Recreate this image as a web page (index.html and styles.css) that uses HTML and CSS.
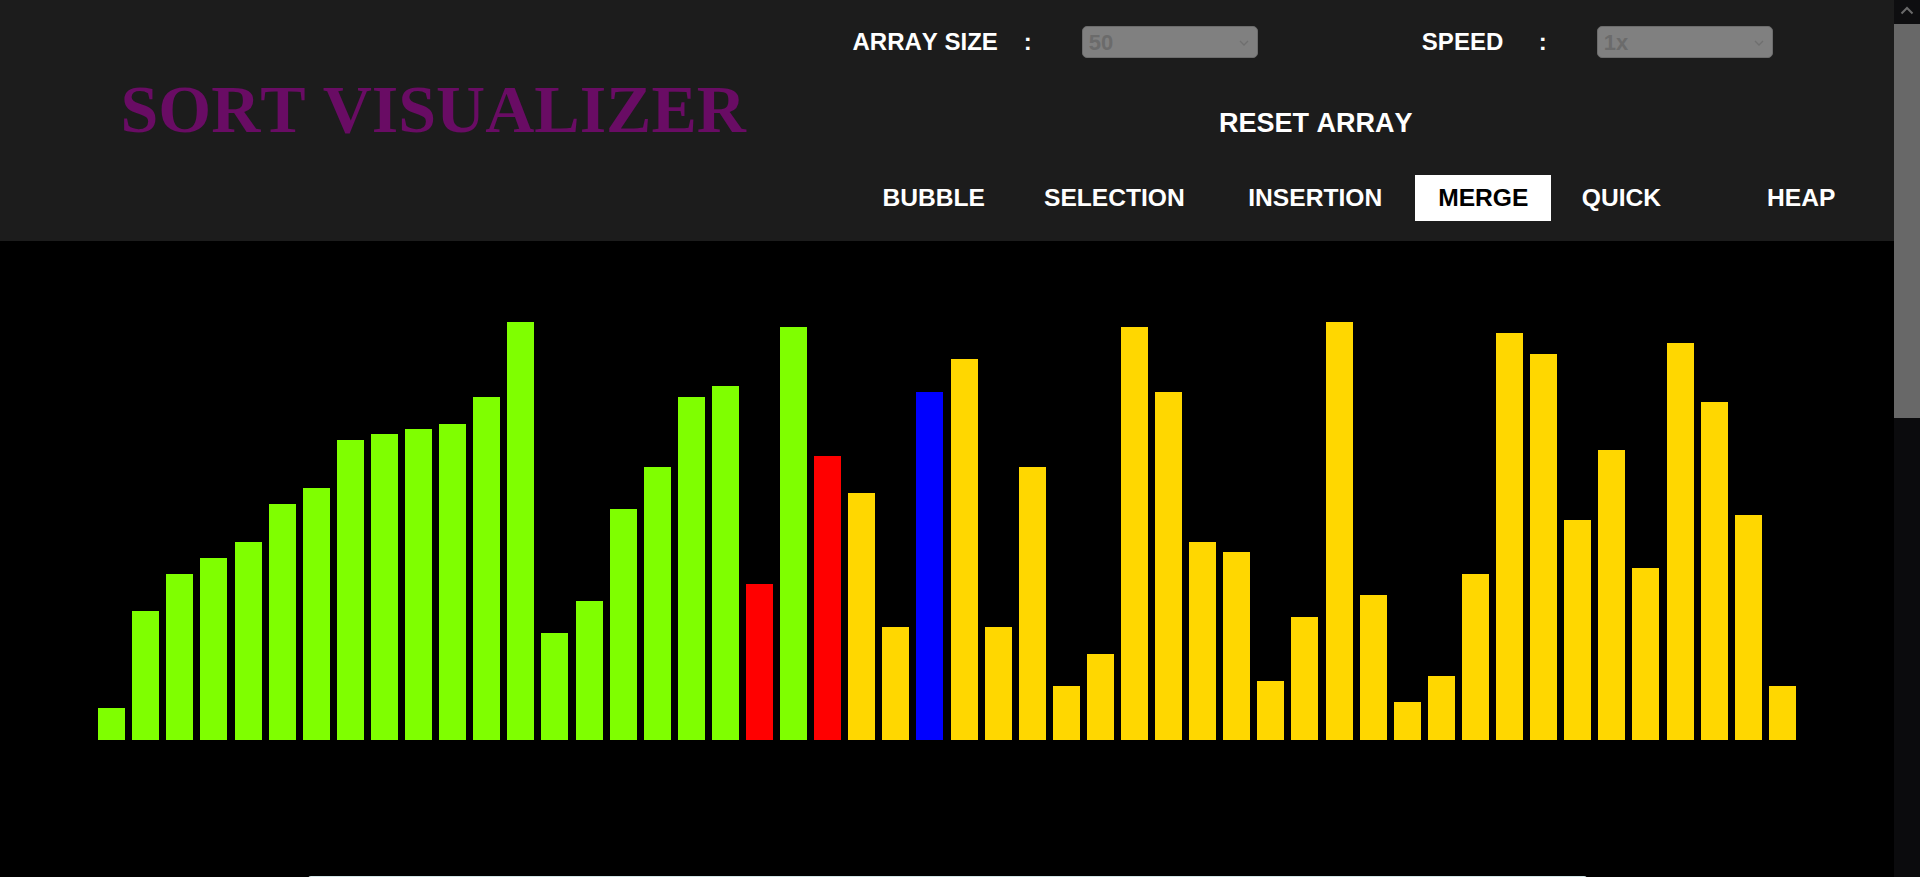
FILE: index.html
```html
<!DOCTYPE html>
<html lang="en">
<head>
<meta charset="utf-8">
<title>Sort Visualizer</title>
<link rel="stylesheet" href="styles.css">
</head>
<body>
<div class="page">
  <header class="topbar">
    <h1 class="title">SORT VISUALIZER</h1>
    <div class="panel">
      <div class="controls">
        <span class="label">ARRAY SIZE</span>
        <span class="colon colon-size">:</span>
        <span class="select-wrap">
          <select class="select" disabled><option>50</option></select>
          <svg class="chevron" width="10" height="6" viewBox="0 0 10 6"><path d="M1 1 L5 5 L9 1" fill="none" stroke="#6f6f6f" stroke-width="1.3"/></svg>
        </span>
        <span class="label label-speed">SPEED</span>
        <span class="colon colon-speed">:</span>
        <span class="select-wrap">
          <select class="select" disabled><option>1x</option></select>
          <svg class="chevron" width="10" height="6" viewBox="0 0 10 6"><path d="M1 1 L5 5 L9 1" fill="none" stroke="#6f6f6f" stroke-width="1.3"/></svg>
        </span>
      </div>
      <button class="reset">RESET ARRAY</button>
      <nav class="algos">
        <button class="algo">BUBBLE</button>
        <button class="algo">SELECTION</button>
        <button class="algo">INSERTION</button>
        <button class="algo active">MERGE</button>
        <button class="algo">QUICK</button>
        <button class="algo">HEAP</button>
      </nav>
    </div>
  </header>
  <main class="stage">
    <div class="bars">
      <div class="bar sorted" style="height:32px"></div>
      <div class="bar sorted" style="height:129px"></div>
      <div class="bar sorted" style="height:166px"></div>
      <div class="bar sorted" style="height:182px"></div>
      <div class="bar sorted" style="height:198px"></div>
      <div class="bar sorted" style="height:236px"></div>
      <div class="bar sorted" style="height:252px"></div>
      <div class="bar sorted" style="height:300px"></div>
      <div class="bar sorted" style="height:306px"></div>
      <div class="bar sorted" style="height:311px"></div>
      <div class="bar sorted" style="height:316px"></div>
      <div class="bar sorted" style="height:343px"></div>
      <div class="bar sorted" style="height:418px"></div>
      <div class="bar sorted" style="height:107px"></div>
      <div class="bar sorted" style="height:139px"></div>
      <div class="bar sorted" style="height:231px"></div>
      <div class="bar sorted" style="height:273px"></div>
      <div class="bar sorted" style="height:343px"></div>
      <div class="bar sorted" style="height:354px"></div>
      <div class="bar compare" style="height:156px"></div>
      <div class="bar sorted" style="height:413px"></div>
      <div class="bar compare" style="height:284px"></div>
      <div class="bar idle" style="height:247px"></div>
      <div class="bar idle" style="height:113px"></div>
      <div class="bar pivot" style="height:348px"></div>
      <div class="bar idle" style="height:381px"></div>
      <div class="bar idle" style="height:113px"></div>
      <div class="bar idle" style="height:273px"></div>
      <div class="bar idle" style="height:54px"></div>
      <div class="bar idle" style="height:86px"></div>
      <div class="bar idle" style="height:413px"></div>
      <div class="bar idle" style="height:348px"></div>
      <div class="bar idle" style="height:198px"></div>
      <div class="bar idle" style="height:188px"></div>
      <div class="bar idle" style="height:59px"></div>
      <div class="bar idle" style="height:123px"></div>
      <div class="bar idle" style="height:418px"></div>
      <div class="bar idle" style="height:145px"></div>
      <div class="bar idle" style="height:38px"></div>
      <div class="bar idle" style="height:64px"></div>
      <div class="bar idle" style="height:166px"></div>
      <div class="bar idle" style="height:407px"></div>
      <div class="bar idle" style="height:386px"></div>
      <div class="bar idle" style="height:220px"></div>
      <div class="bar idle" style="height:290px"></div>
      <div class="bar idle" style="height:172px"></div>
      <div class="bar idle" style="height:397px"></div>
      <div class="bar idle" style="height:338px"></div>
      <div class="bar idle" style="height:225px"></div>
      <div class="bar idle" style="height:54px"></div>
    </div>
  </main>
  <div class="footer-strip"></div>
</div>
<div class="scrollbar">
  <div class="scroll-btn">
    <svg width="14" height="9" viewBox="0 0 14 9"><path d="M1.5 7.5 L7 2 L12.5 7.5" fill="none" stroke="#6a6a6a" stroke-width="2"/></svg>
  </div>
  <div class="scroll-thumb"></div>
  <div class="scroll-track"></div>
</div>
</body>
</html>
```

FILE: styles.css
```css
* {
  box-sizing: border-box;
}

html,
body {
  margin: 0;
  padding: 0;
  height: 877px;
  overflow: hidden;
  background: #000;
}

body {
  display: flex;
  font-family: "Liberation Sans", Arial, sans-serif;
  font-kerning: none;
}

.page {
  flex: 1;
  min-width: 0;
  display: flex;
  flex-direction: column;
  overflow: hidden;
}

/* ---------- header ---------- */
.topbar {
  flex: none;
  height: 241px;
  background: #1c1c1c;
  display: grid;
  grid-template-columns: 840px 1fr;
}

.title {
  margin: 70px 0 0 0;
  padding-left: 120.5px;
  font-family: "Liberation Serif", "Times New Roman", serif;
  font-weight: bold;
  font-size: 68px;
  line-height: 78px;
  color: #690c64;
  white-space: nowrap;
  align-self: start;
  font-kerning: none;
}

.panel {
  display: flex;
  flex-direction: column;
  align-items: flex-start;
}

.controls {
  margin-top: 26px;
  height: 32px;
  padding-left: 12.5px;
  display: flex;
  align-items: center;
  color: #fff;
  font-weight: bold;
  font-size: 24px;
}

.label {
  white-space: nowrap;
}

.colon-size {
  margin-left: 26px;
}

.colon-speed {
  margin-left: 35.5px;
}

.label-speed {
  margin-left: 164px;
}

.select-wrap {
  position: relative;
  margin-left: 50px;
  width: 176px;
  height: 32px;
  display: block;
}

.select {
  appearance: none;
  -webkit-appearance: none;
  width: 176px;
  height: 32px;
  margin: 0;
  padding: 0 0 0 6px;
  background: #808080;
  border: 1px solid #6c6c6c;
  border-radius: 5px;
  color: #6b6b6b;
  font-family: "Liberation Sans", Arial, sans-serif;
  font-weight: bold;
  font-size: 22px;
  font-kerning: none;
  opacity: 1;
}

.chevron {
  position: absolute;
  right: 9px;
  top: 14px;
}

.reset {
  margin: 50px 0 0 379px;
  padding: 0;
  border: 0;
  background: transparent;
  color: #fff;
  font-family: "Liberation Sans", Arial, sans-serif;
  font-weight: bold;
  font-size: 27px;
  line-height: 30px;
  white-space: nowrap;
  font-kerning: none;
}

.algos {
  margin-top: 36.7px;
  display: flex;
  padding-left: 19.5px;
}

.algo {
  height: 46px;
  padding: 0 23px;
  border: 0;
  background: transparent;
  color: #fff;
  font-family: "Liberation Sans", Arial, sans-serif;
  font-weight: bold;
  font-size: 24.6px;
  line-height: 46px;
  white-space: nowrap;
  font-kerning: none;
}

.algo:nth-child(2) { margin-left: 13px; }
.algo:nth-child(3) { margin-left: 17.5px; }
.algo:nth-child(4) { margin-left: 10px; }
.algo:nth-child(5) { margin-left: 7.5px; }
.algo:nth-child(6) { margin-left: 60px; }

.algo.active {
  background: #fff;
  color: #000;
}

/* ---------- bars ---------- */
.stage {
  flex: none;
  height: 499px;
  display: flex;
  justify-content: center;
  align-items: flex-end;
}

.bars {
  display: flex;
  align-items: flex-end;
  gap: 7.1px;
}

.bar {
  width: 27px;
  flex: none;
}

.sorted { background: #7fff00; }
.compare { background: #ff0000; }
.pivot { background: #0000ff; }
.idle { background: #ffd700; }

.footer-strip {
  flex: none;
  margin: 136px auto 0;
  width: 1279px;
  height: 40px;
  border-radius: 3px;
  background: #d3e6e8;
}

/* ---------- scrollbar ---------- */
.scrollbar {
  flex: none;
  width: 26px;
  height: 877px;
  display: flex;
  flex-direction: column;
  background: #0b0b0d;
}

.scroll-btn {
  height: 24px;
  background: #0e0e10;
  display: flex;
  justify-content: center;
  align-items: flex-start;
  padding-top: 6px;
}

.scroll-thumb {
  height: 394px;
  background: #686868;
}

.scroll-track {
  flex: 1;
}
```
